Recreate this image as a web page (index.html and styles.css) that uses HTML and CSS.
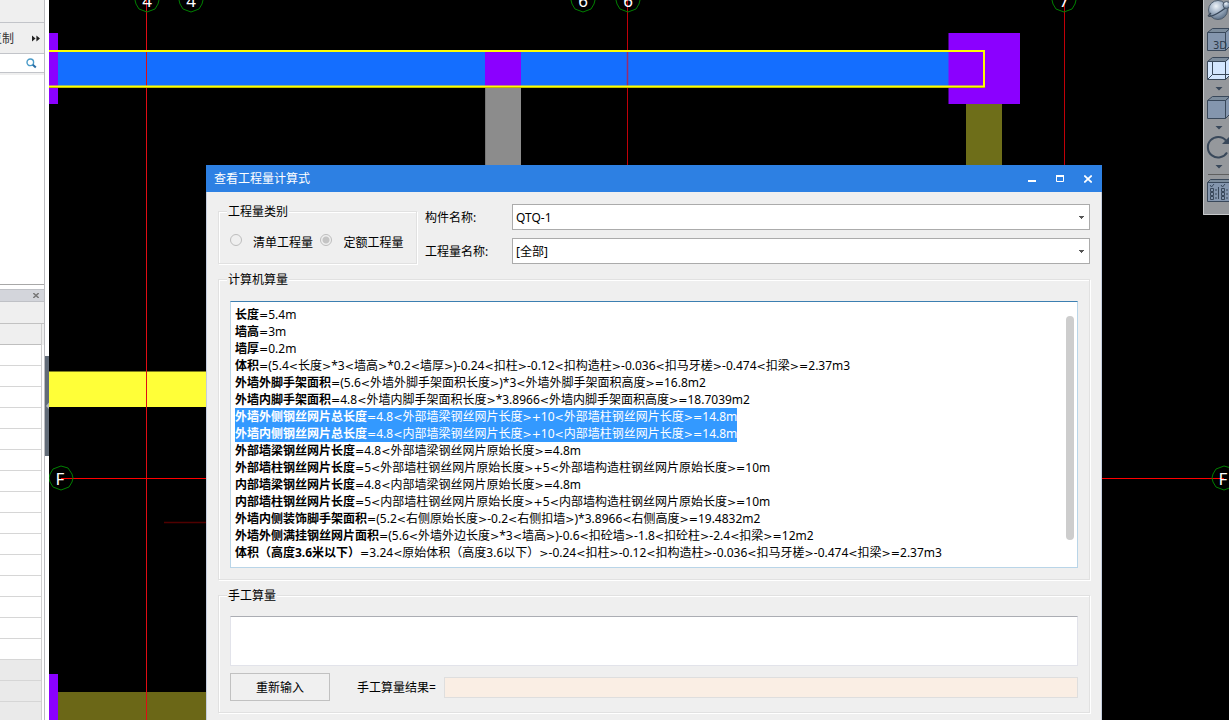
FILE: index.html
```html
<!DOCTYPE html>
<html lang="zh-CN">
<head>
<meta charset="utf-8">
<title>查看工程量计算式</title>
<link rel="stylesheet" href="styles.css">
</head>
<body>
<div class="app">
  <aside class="side">
    <div class="side-strip"></div>
    <div class="side-tools">
      <button class="copy" type="button">复制</button>
      <button class="more" type="button" aria-label="更多"><svg width="8" height="7" viewBox="0 0 8 7"><path d="M0 0.5L3.6 3.5L0 6.5ZM4.4 0.5L8 3.5L4.4 6.5Z" fill="#222"/></svg></button>
    </div>
    <div class="search">
      <input type="search" aria-label="搜索">
      <svg width="11" height="11" viewBox="0 0 11 11"><circle cx="4.3" cy="4.3" r="3.3" fill="#fff" stroke="#4a9bc8" stroke-width="1.4"/><path d="M6.8 6.8L9.8 9.6" stroke="#2a6ea5" stroke-width="2"/></svg>
    </div>
    <div class="tree"></div>
    <div class="prop-title"><button type="button" aria-label="关闭"><svg width="6" height="5" viewBox="0 0 6 5"><path d="M0.3 0L5.7 5M5.7 0L0.3 5" stroke="#777" stroke-width="1.4"/></svg></button></div>
    <div class="prop-tools"></div>
    <div class="prop-body">
      <div class="prop-grid">
        <div class="cell head"></div><div class="cell"></div><div class="cell"></div><div class="cell"></div>
        <div class="cell"></div><div class="cell"></div><div class="cell"></div><div class="cell"></div>
        <div class="cell"></div><div class="cell"></div><div class="cell"></div><div class="cell"></div>
        <div class="cell"></div><div class="cell"></div><div class="cell"></div><div class="cell"></div>
        <div class="cell dim"></div><div class="cell dim"></div><div class="cell dim"></div>
      </div>
    </div>
  </aside>
  <div class="splitter"><button type="button" aria-label="折叠"><svg width="4" height="8" viewBox="0 0 4 8"><path d="M4 0.5V7L1 4Z" fill="#b5bac0"/></svg></button></div>

  <main class="stage">
    <svg class="drawing" width="100%" height="100%">
      <defs>
        <polygon id="bubble" points="0,-12 7,-10 11,-4 12,0 11,4 8,9 0,12 -8,9 -11,4 -12,0 -11,-4 -8,-9"/>
      </defs>
      <g transform="translate(-49 0)">
        <rect x="49" y="33" width="9" height="71" fill="#8b00ff"/>
        <rect x="58" y="51" width="891" height="35" fill="#146eff"/>
        <rect x="485" y="51" width="36" height="35" fill="#8b00ff"/>
        <rect x="485" y="86" width="36" height="91" fill="#8c8c8c"/>
        <path d="M485.500 87V177" stroke="#777"/>
        <rect x="948.500" y="33" width="71.500" height="71" fill="#8b00ff"/>
        <rect x="966" y="104" width="36" height="73" fill="#6e6e19"/>
        <rect x="49" y="371.500" width="200" height="35.500" fill="#ffff38"/>
        <rect x="49" y="674" width="9" height="60" fill="#8b00ff"/>
        <rect x="58" y="692" width="180" height="60" fill="#6b6717"/>
        <g fill="none">
          <path d="M146.500 0V900" stroke="#e00c14"/>
          <path d="M627.500 0V51M627.500 87V177M1064.500 0V177" stroke="#c00008"/>
          <path d="M627.500 52V86" stroke="#9c2a6c" stroke-width="1.500"/>
          <path d="M61 478.500H230M1090 478.500H1224" stroke="#f00"/>
          <path d="M164 522.500H230" stroke="#500000" stroke-width="1.500"/>
          <path d="M49 87.500H985" stroke="#808000"/>
          <path d="M49 51H984V86.500H49" stroke="#ff0" stroke-width="2"/>
        </g>
        <g fill="none" stroke="#008000">
          <use href="#bubble" x="147" y="0"/><use href="#bubble" x="191" y="0"/>
          <use href="#bubble" x="583" y="0"/><use href="#bubble" x="628" y="0"/>
          <use href="#bubble" x="1064" y="0"/><use href="#bubble" x="61" y="478"/>
          <use href="#bubble" x="1224" y="478"/>
        </g>
        <g class="axis">
          <text x="147" y="7">4</text><text x="191" y="7">4</text>
          <text x="583" y="7">6</text><text x="628" y="7">6</text>
          <text x="1064" y="7">7</text><text x="60" y="485">F</text>
          <text x="1223" y="485">F</text>
        </g>
      </g>
    </svg>

    <nav class="viewbar" aria-label="视图">
      <svg width="26" height="215" viewBox="0 0 26 215">
        <defs>
          <radialGradient id="ball" cx=".4" cy=".3" r=".7"><stop offset="0" stop-color="#eef3f8"/><stop offset=".5" stop-color="#a3b3c6"/><stop offset="1" stop-color="#5f7389"/></radialGradient>
        </defs>
        <path d="M0.500 0V214.500H26" fill="none" stroke="#c8cacc"/>
        <circle cx="15" cy="10" r="9.500" fill="url(#ball)" stroke="#4c5b6c"/>
        <path d="M5 16C10 18 20 10 25 6M5 16L8 13" fill="none" stroke="#39485a" stroke-width="1.300"/>
        <circle cx="23.500" cy="5" r="3.500" fill="url(#ball)" stroke="#4c5b6c"/>
        <g stroke="#39485a">
          <path d="M4.500 32.500L9.500 28.500H27L22.500 32.500Z" fill="#7c8c9c"/>
          <path d="M4.500 32.500H22.500V50.500H4.500ZM22.500 32.500L27 28.500V46L22.500 50.500Z" fill="#8496ae"/>
          <path d="M4.500 61.500L9.500 57.500H27L22.500 61.500Z" fill="#7c8c9c"/>
          <path d="M4.500 61.500H22.500V79.500H4.500ZM22.500 61.500L27 57.500V75L22.500 79.500Z" fill="#d4e7ff"/>
          <path d="M9.500 62V74.500H26M9.500 74.500L4.500 79.500" fill="none"/>
          <path d="M4.500 100.500L9.500 96.500H27L22.500 100.500Z" fill="#7c8c9c"/>
          <path d="M4.500 100.500H22.500V118.500H4.500ZM22.500 100.500L27 96.500V114L22.500 118.500Z" fill="#8496ae"/>
          <path d="M4.500 182.500L7.500 179.500H27V182.500Z" fill="#7c8c9c"/>
          <path d="M4.500 182.500H27V201.500H4.500Z" fill="#8496ae"/>
          <path d="M7.500 188.500H10.500V191.500H7.500ZM7.500 192.500H10.500V195.500H7.500ZM7.500 196.500H10.500V199.500H7.500ZM18.500 188.500H21.500V191.500H18.500ZM18.500 192.500H21.500V195.500H18.500ZM18.500 196.500H21.500V199.500H18.500ZM15.500 187V199M12 190H14M12 194H14M12 198H14M23 190H25M23 194H25M23 198H25M7 185L8.500 187L11 184M18 185L19.500 187L22 184" fill="none"/>
          <path d="M23 140.500A10.300 10.300 0 1 0 24 152.500" fill="none" stroke-width="2"/>
        </g>
        <path d="M26 137V144H19Z" fill="#39485a"/>
        <path d="M12.500 87H19.500L16 90.500ZM12.500 126H19.500L16 129.500ZM12.500 165H19.500L16 168.500Z" fill="#39485a"/>
        <path d="M5 174.500H26" stroke="#5f5f5f"/>
        <text class="cube-label" x="10" y="49">3D</text>
      </svg>
    </nav>

    <section class="dialog" role="dialog" aria-labelledby="dlg-title">
      <header class="titlebar">
        <h1 id="dlg-title">查看工程量计算式</h1>
        <div class="winbtns">
          <button type="button" aria-label="最小化"><svg width="8" height="8" viewBox="0 0 8 8"><path d="M0 6H8" stroke="#fff" stroke-width="2"/></svg></button>
          <button type="button" aria-label="最大化"><svg width="8" height="8" viewBox="0 0 8 8"><path d="M0.500 1V6.500H7.500V1" fill="none" stroke="#fff"/><path d="M0 1H8" stroke="#fff" stroke-width="2"/></svg></button>
          <button type="button" aria-label="关闭"><svg width="8" height="8" viewBox="0 0 8 8"><path d="M0.300 0.500L7.700 7.500M7.700 0.500L0.300 7.500" stroke="#fff" stroke-width="1.700"/></svg></button>
        </div>
      </header>
      <form class="body">
        <div class="filters">
          <fieldset class="group kinds">
            <legend>工程量类别</legend>
            <div class="kind-row">
              <input type="radio" name="kind" id="k1" disabled><label for="k1">清单工程量</label>
              <input type="radio" name="kind" id="k2" disabled checked><label for="k2">定额工程量</label>
            </div>
          </fieldset>
          <div class="combos">
            <label for="part">构件名称:</label>
            <select id="part"><option>QTQ-1</option></select>
            <label for="qty">工程量名称:</label>
            <select id="qty"><option>[全部]</option></select>
          </div>
        </div>

        <fieldset class="group">
          <legend>计算机算量</legend>
          <div class="result" tabindex="0">
            <p><b>长度</b><i>=</i>5.4m</p>
            <p><b>墙高</b><i>=</i>3m</p>
            <p><b>墙厚</b><i>=</i>0.2m</p>
            <p><b>体积</b><i>=</i>(5.4<i>&lt;</i>长度<i>&gt;</i>*3<i>&lt;</i>墙高<i>&gt;</i>*0.2<i>&lt;</i>墙厚<i>&gt;</i>)-0.24<i>&lt;</i>扣柱<i>&gt;</i>-0.12<i>&lt;</i>扣构造柱<i>&gt;</i>-0.036<i>&lt;</i>扣马牙槎<i>&gt;</i>-0.474<i>&lt;</i>扣梁<i>&gt;=</i>2.37m3</p>
            <p><b>外墙外脚手架面积</b><i>=</i>(5.6<i>&lt;</i>外墙外脚手架面积长度<i>&gt;</i>)*3<i>&lt;</i>外墙外脚手架面积高度<i>&gt;=</i>16.8m2</p>
            <p><b>外墙内脚手架面积</b><i>=</i>4.8<i>&lt;</i>外墙内脚手架面积长度<i>&gt;</i>*3.8966<i>&lt;</i>外墙内脚手架面积高度<i>&gt;=</i>18.7039m2</p>
            <p class="picked"><b>外墙外侧钢丝网片总长度</b><i>=</i>4.8<i>&lt;</i>外部墙梁钢丝网片长度<i>&gt;+</i>10<i>&lt;</i>外部墙柱钢丝网片长度<i>&gt;=</i>14.8m</p>
            <p class="picked"><b>外墙内侧钢丝网片总长度</b><i>=</i>4.8<i>&lt;</i>内部墙梁钢丝网片长度<i>&gt;+</i>10<i>&lt;</i>内部墙柱钢丝网片长度<i>&gt;=</i>14.8m</p>
            <p><b>外部墙梁钢丝网片长度</b><i>=</i>4.8<i>&lt;</i>外部墙梁钢丝网片原始长度<i>&gt;=</i>4.8m</p>
            <p><b>外部墙柱钢丝网片长度</b><i>=</i>5<i>&lt;</i>外部墙柱钢丝网片原始长度<i>&gt;+</i>5<i>&lt;</i>外部墙构造柱钢丝网片原始长度<i>&gt;=</i>10m</p>
            <p><b>内部墙梁钢丝网片长度</b><i>=</i>4.8<i>&lt;</i>内部墙梁钢丝网片原始长度<i>&gt;=</i>4.8m</p>
            <p><b>内部墙柱钢丝网片长度</b><i>=</i>5<i>&lt;</i>内部墙柱钢丝网片原始长度<i>&gt;+</i>5<i>&lt;</i>内部墙构造柱钢丝网片原始长度<i>&gt;=</i>10m</p>
            <p><b>外墙内侧装饰脚手架面积</b><i>=</i>(5.2<i>&lt;</i>右侧原始长度<i>&gt;</i>-0.2<i>&lt;</i>右侧扣墙<i>&gt;</i>)*3.8966<i>&lt;</i>右侧高度<i>&gt;=</i>19.4832m2</p>
            <p><b>外墙外侧满挂钢丝网片面积</b><i>=</i>(5.6<i>&lt;</i>外墙外边长度<i>&gt;</i>*3<i>&lt;</i>墙高<i>&gt;</i>)-0.6<i>&lt;</i>扣砼墙<i>&gt;</i>-1.8<i>&lt;</i>扣砼柱<i>&gt;</i>-2.4<i>&lt;</i>扣梁<i>&gt;=</i>12m2</p>
            <p><b>体积（高度3.6米以下）</b><i>=</i>3.24<i>&lt;</i>原始体积（高度3.6以下）<i>&gt;</i>-0.24<i>&lt;</i>扣柱<i>&gt;</i>-0.12<i>&lt;</i>扣构造柱<i>&gt;</i>-0.036<i>&lt;</i>扣马牙槎<i>&gt;</i>-0.474<i>&lt;</i>扣梁<i>&gt;=</i>2.37m3</p>
            <span class="thumb"></span>
          </div>
        </fieldset>

        <fieldset class="group manual">
          <legend>手工算量</legend>
          <textarea aria-label="手工算量"></textarea>
          <div class="manual-row">
            <button type="button">重新输入</button>
            <label for="manual-result">手工算量结果=</label>
            <input type="text" id="manual-result" readonly>
          </div>
        </fieldset>
      </form>
    </section>
  </main>
</div>
</body>
</html>
```

FILE: styles.css
```css
* { box-sizing: border-box; }
body {
  margin: 0;
  font: 12px/16px "Noto Sans", "Noto Sans CJK SC", sans-serif;
  color: #000;
  background: #000;
}
button, input, select, textarea { font: inherit; color: inherit; margin: 0; padding: 0; border: 0; border-radius: 0; background: none; }
svg { display: block; }
p { margin: 0; }

.app { display: flex; height: 100vh; overflow: hidden; }

/* left dock */
.side { flex: none; width: 45px; display: flex; flex-direction: column; background: #fff; border-right: 1px solid #bcbcc0; overflow: hidden; }
.side > * { flex: none; }
.side-strip { height: 23px; background: #efefef; border-bottom: 1px solid #c2c4c9; }
.side-tools { height: 31px; display: flex; align-items: center; justify-content: flex-end; gap: 18px; padding-right: 4px; background: #efefef; border-bottom: 1px solid #c2c4c9; }
.copy { flex: none; padding-top: 2px; color: #333; white-space: nowrap; }
.search { height: 19px; display: flex; align-items: center; padding-right: 7px; border-bottom: 1px solid #c2c4c9; }
.search input { flex: 1; min-width: 0; height: 16px; outline: 0; }
.tree { height: 212px; border-top: 2px solid #efefef; border-bottom: 1px solid #a8a8a8; }
.prop-title { height: 13px; margin-top: 4px; display: flex; align-items: center; justify-content: flex-end; padding-right: 5px; background: #d3d5db; border: solid #bfc1c6; border-width: 1px 0; }
.prop-tools { height: 21px; background: #efefef; }
.prop-body { border-top: 1px solid #c2c2c2; padding-right: 2px; background: linear-gradient(#efefef 21px, #fff 21px); }
.prop-grid { display: grid; grid-auto-rows: 21px; border-right: 1px solid #cfcfcf; }
.cell { border-bottom: 1px solid #d6d6d6; background: #fff; }
.cell.head { background: #efefef; border-color: #bfbfbf; }
.cell.dim { background: #eaeaea; }

.splitter { flex: none; width: 4px; background: #fff; padding-top: 356px; }
.splitter button { display: flex; align-items: center; width: 4px; height: 100px; background: #626c78; }

/* drawing area */
.stage { position: relative; flex: 1; min-width: 0; overflow: hidden; background: #000; }
.axis { fill: #fff; font: 17px "Noto Sans", sans-serif; text-anchor: middle; }
.viewbar { position: absolute; top: 0; right: 0; background: #95989c; }
.cube-label { fill: #2c3a4a; font: 10px "DejaVu Sans", sans-serif; }

/* dialog */
.dialog { position: absolute; top: 165px; left: 157px; right: 127px; border: solid #c5cede; border-width: 0 1px 1px; background: #efefef; }
.titlebar { display: flex; align-items: center; justify-content: space-between; height: 27px; margin: 0 -1px; padding: 0 10px 0 8px; background: #2d80e3; color: #fff; }
.titlebar h1 { margin: 0; font-size: 12px; font-weight: 400; }
.winbtns { display: flex; gap: 20px; }
.body { display: flex; flex-direction: column; gap: 7px; padding: 11px; }

.filters { display: flex; align-items: flex-end; gap: 8px; }
.group { min-width: 0; margin: 0; padding: 13px 11px 11px; border: 1px solid #e1e1e1; box-shadow: 1px 1px #fff, inset 1px 1px #fff; }
.group legend { margin-left: -3px; padding: 1px 1px 0; line-height: 16px; background: #efefef; }
.kinds { flex: none; width: 199px; height: 61px; padding-top: 14px; }
.kind-row { display: flex; align-items: center; white-space: nowrap; }
.kind-row label { width: 65px; margin-left: 11px; padding-top: 1px; }
.kind-row label + input { margin-left: 4px; }
.kind-row label:first-of-type { width: 67px; }
.kind-row input { flex: none; appearance: none; width: 12px; height: 12px; margin-bottom: 5px; border: 1px solid #bdbdbd; border-radius: 50%; }
.kind-row input:checked { background: radial-gradient(circle, #c4c4c4 3px, transparent 4px); }

.combos { flex: 1; min-width: 0; display: grid; grid-template-columns: 80px 1fr; grid-auto-rows: 26px; gap: 8px 7px; align-items: center; }
.combos label { padding-top: 2px; }
.combos select {
  appearance: none;
  width: 100%;
  height: 26px;
  padding: 2px 20px 0 3px;
  border: 1px solid #ababab;
  background-color: #fff;
  background-image: linear-gradient(#555, #555), linear-gradient(#555, #555), linear-gradient(#555, #555);
  background-repeat: no-repeat;
  background-size: 5px 1px, 3px 1px, 1px 1px;
  background-position: right 5px top 11px, right 6px top 12px, right 7px top 13px;
}

.result { position: relative; padding: 4px 4px 6px; line-height: 17px; white-space: nowrap; overflow: hidden; border: 1px solid #b9d5e8; border-top-color: #3c7fb1; background: #fff; outline: 0; }
.result p { width: max-content; height: 17px; }
.result i { font: 11px/1 "DejaVu Sans", sans-serif; }
.picked { background: #3399ff; color: #fff; }
.thumb { position: absolute; top: 14px; right: 3px; bottom: 27px; width: 8px; border-radius: 4px; background: #cdcdcd; }

.manual { padding-top: 12px; }
.manual textarea { display: block; width: 100%; height: 50px; resize: none; border: 1px solid #e2e3ea; border-top-color: #abadb3; background: #fff; }
.manual-row { display: flex; align-items: center; margin-top: 7px; }
.manual-row button { width: 100px; height: 28px; margin-right: 27px; padding-top: 2px; border: 1px solid #c1c1c1; background: #f0f0f0; }
.manual-row label { flex: none; width: 87px; padding-top: 2px; }
.manual-row input { flex: 1; min-width: 0; height: 21px; border: 1px solid #dedede; background: #faeee4; }
```
